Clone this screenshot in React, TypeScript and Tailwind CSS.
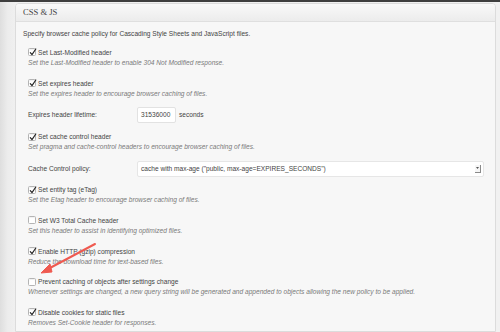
import React from 'react';

const sans = { fontFamily: '"Liberation Sans", Arial, sans-serif' };

function Check({ checked }: { checked: boolean }) {
  return (
    <span className="relative inline-block w-[8px] h-[8px] mr-[2px] border border-[#b4b4b4] rounded-[1.5px] bg-white shrink-0 shadow-[inset_0_1px_1px_rgba(0,0,0,0.06)]">
      {checked && (
        <svg className="absolute left-[0px] top-[-1px]" width="8" height="8" viewBox="0 0 8 8">
          <path d="M1.3 4.6 L3 6.6 L6.8 1" fill="none" stroke="#2a2a2a" strokeWidth="1.2" strokeLinecap="round" strokeLinejoin="round" />
        </svg>
      )}
    </span>
  );
}

function Option({ checked, label, desc, className = '' }: { checked: boolean; label: string; desc: string; className?: string }) {
  return (
    <div className={`pl-[5px] ${className}`}>
      <div className="flex items-center h-[11px] leading-[11px] text-[#444]">
        <Check checked={checked} />
        <span>{label}</span>
      </div>
      <div className="h-[10.5px] leading-[10.5px] italic text-[#7a7a7a] whitespace-nowrap">{desc}</div>
    </div>
  );
}

export default function App() {
  return (
    <div className="w-[500px] h-[332px] overflow-hidden bg-[#f1f1f1] relative" style={sans}>
      <div className="h-[2px] bg-[#3f3f3f]" />
      <div className="flex h-[330px]">
        <div className="w-[15px] shrink-0 bg-gradient-to-r from-[#dedede] via-[#ececec] to-[#f0f0f0]" />
        <div className="w-[481px] shrink-0 mt-[1px] border border-[#dcdcdc] rounded-t-[4px] bg-[#f7f7f7] overflow-hidden">
          <div className="h-[18px] flex items-center px-[7px] bg-gradient-to-b from-[#f9f9f9] to-[#ececec] border-b border-[#dfdfdf]">
            <span className="text-[8.6px] text-[#464646]" style={{ fontFamily: '"Liberation Serif", "Times New Roman", serif' }}>
              CSS &amp; JS
            </span>
          </div>
          <div className="px-[7px] pt-[6px] text-[6.6px]">
            <div className="h-[11px] leading-[11px] text-[#444]">
              Specify browser cache policy for Cascading Style Sheets and JavaScript files.
            </div>
            <Option className="mt-[7.5px]" checked label="Set Last-Modified header" desc="Set the Last-Modified header to enable 304 Not Modified response." />
            <Option className="mt-[9.5px]" checked label="Set expires header" desc="Set the expires header to encourage browser caching of files." />
            <div className="mt-[8px] pl-[5px] flex items-center h-[16px] text-[#444]">
              <span className="w-[109px]">Expires header lifetime:</span>
              <div className="w-[39px] h-[16px] bg-white border border-[#e2e2e2] rounded-[2px] flex items-center px-[3px]">31536000</div>
              <span className="ml-[3px]">seconds</span>
            </div>
            <Option className="mt-[8px]" checked label="Set cache control header" desc="Set pragma and cache-control headers to encourage browser caching of files." />
            <div className="mt-[8px] pl-[5px] flex items-center h-[16px] text-[#444]">
              <span className="w-[109px]">Cache Control policy:</span>
              <div className="w-[347px] h-[16px] bg-white border border-[#e6e6e6] rounded-[2px] flex items-center pl-[3px] pr-[2px]">
                <span className="flex-1">cache with max-age ("public, max-age=EXPIRES_SECONDS")</span>
                <span className="w-[6px] h-[8px] bg-[#f6f6f6] border-r border-b border-r-[#8a8a8a] border-b-[#8a8a8a] flex items-center justify-center">
                  <svg width="3" height="2" viewBox="0 0 3 2">
                    <path d="M0 0 H3 L1.5 2 Z" fill="#555" />
                  </svg>
                </span>
              </div>
            </div>
            <Option className="mt-[7.5px]" checked label="Set entity tag (eTag)" desc="Set the Etag header to encourage browser caching of files." />
            <Option className="mt-[9px]" checked={false} label="Set W3 Total Cache header" desc="Set this header to assist in identifying optimized files." />
            <Option className="mt-[9.5px]" checked label="Enable HTTP (gzip) compression" desc="Reduce the download time for text-based files." />
            <Option className="mt-[9px]" checked={false} label="Prevent caching of objects after settings change" desc="Whenever settings are changed, a new query string will be generated and appended to objects allowing the new policy to be applied." />
            <Option className="mt-[9px]" checked label="Disable cookies for static files" desc="Removes Set-Cookie header for responses." />
          </div>
        </div>
      </div>
      <svg className="absolute left-0 top-0 pointer-events-none" width="500" height="332">
        <line x1="95" y1="244" x2="48" y2="269" stroke="#ef5a50" strokeWidth="2" strokeLinecap="round" />
        <path d="M41 273 L50 264 L52 272 Z" fill="#ef5a50" stroke="#ef5a50" strokeWidth="1" strokeLinejoin="round" />
      </svg>
    </div>
  );
}
